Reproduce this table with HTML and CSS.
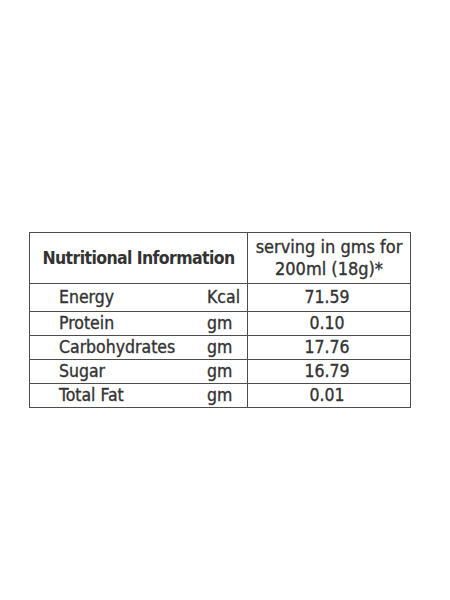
FILE: index.html
```html
<!DOCTYPE html>
<html lang="en">
<head>
  <meta charset="UTF-8">
  <meta name="viewport" content="width=device-width, initial-scale=1.0">
  <title>Nutritional Information</title>
  <link rel="stylesheet" href="styles.css">
</head>
<body>

<div class="page">
  <table class="nutri-table">
    <thead>
      <tr class="head-row">
        <th class="title" colspan="2">Nutritional Information</th>
        <th class="serving">serving in gms for<br>200ml (18g)*</th>
      </tr>
    </thead>
    <tbody>
      <tr class="row-energy">
        <td class="name">Energy</td>
        <td class="unit">Kcal</td>
        <td class="value">71.59</td>
      </tr>
      <tr>
        <td class="name">Protein</td>
        <td class="unit">gm</td>
        <td class="value">0.10</td>
      </tr>
      <tr>
        <td class="name">Carbohydrates</td>
        <td class="unit">gm</td>
        <td class="value">17.76</td>
      </tr>
      <tr>
        <td class="name">Sugar</td>
        <td class="unit">gm</td>
        <td class="value">16.79</td>
      </tr>
      <tr>
        <td class="name">Total Fat</td>
        <td class="unit">gm</td>
        <td class="value">0.01</td>
      </tr>
    </tbody>
  </table>
</div>

</body>
</html>
```

FILE: styles.css
```css
/* Page */
body {
  margin: 0;
  background: #fff;
  font-family: "DejaVu Sans Condensed", "DejaVu Sans", sans-serif;
  color: #333;
}
.page {
  height: 600px;
  padding: 232px 0 0 29px;
  box-sizing: border-box;
}
/* Table */
.nutri-table {
  border-collapse: collapse;
  border: 1.5px solid #4d4d4d;
  width: 382px;
  font-size: 17.5px;
  -webkit-text-stroke: 0.35px #333;
}
.nutri-table th,
.nutri-table td {
  padding: 0;
  border-top: 1.5px solid #4d4d4d;
  border-bottom: 1.5px solid #4d4d4d;
}
.head-row {
  height: 51px;
}
.title {
  font-size: 17.5px;
  letter-spacing: -0.6px;
  font-weight: bold;
  text-align: center;
  padding-top: 2px;
  border-right: 1.5px solid #4d4d4d;
  -webkit-text-stroke: 0;
}
.serving {
  font-weight: normal;
  font-size: 18px;
  line-height: 22px;
  text-align: center;
  width: 162px;
}
.nutri-table tbody tr {
  height: 24px;
}
.nutri-table tbody .row-energy {
  height: 28px;
}
.nutri-table tbody td {
  line-height: 20px;
  padding-bottom: 2px;
}
.name {
  padding-left: 29px !important;
  width: 148px;
}
.unit {
  border-right: 1.5px solid #4d4d4d;
}
.value {
  text-align: center;
  padding-right: 4px !important;
}
```
